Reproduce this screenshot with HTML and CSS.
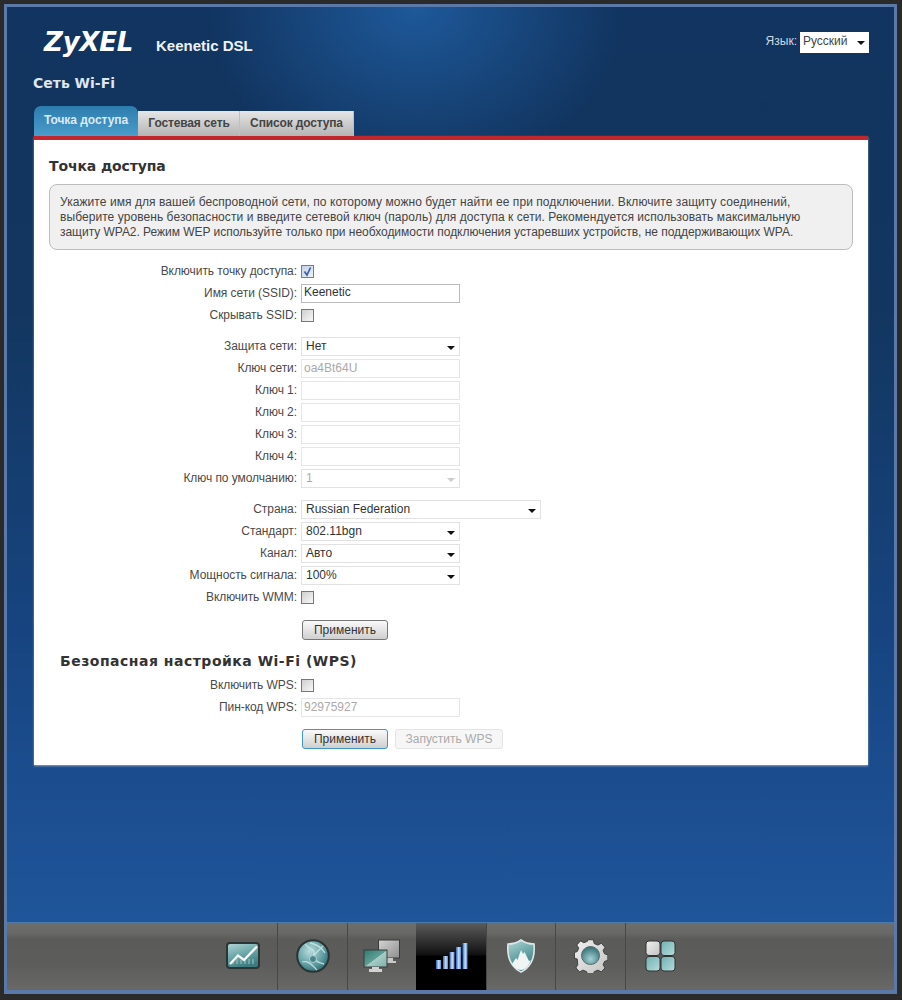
FILE: index.html
```html
<!DOCTYPE html>
<html lang="ru">
<head>
<meta charset="utf-8">
<title>Сеть Wi-Fi</title>
<link rel="stylesheet" href="styles.css">
</head>
<body>
<svg class="defs" width="0" height="0" aria-hidden="true">
  <defs>
    <linearGradient id="teal" x1="0" y1="0" x2="0.4" y2="1"><stop offset="0" stop-color="#b4d8d8"/><stop offset=".55" stop-color="#6ba6a8"/><stop offset="1" stop-color="#3c7c80"/></linearGradient>
    <linearGradient id="tealb" x1="0" y1="0" x2="1" y2="1"><stop offset="0" stop-color="#6fb0b2"/><stop offset="1" stop-color="#b9dcdc"/></linearGradient>
    <linearGradient id="screen" x1="0" y1="0" x2="1" y2="1"><stop offset="0" stop-color="#2f7a70"/><stop offset=".5" stop-color="#5f9f96"/><stop offset=".52" stop-color="#a8ccc6"/><stop offset="1" stop-color="#7fb0aa"/></linearGradient>
    <linearGradient id="grey" x1="0" y1="0" x2="1" y2="1"><stop offset="0" stop-color="#d4d4d4"/><stop offset="1" stop-color="#8e8e8e"/></linearGradient>
    <linearGradient id="light" x1="0" y1="0" x2="1" y2="1"><stop offset="0" stop-color="#f0f0f0"/><stop offset="1" stop-color="#c2c2c2"/></linearGradient>
    <linearGradient id="bar" x1="0" y1="0" x2="1" y2="0"><stop offset="0" stop-color="#2a62b0"/><stop offset=".55" stop-color="#cfe1f7"/><stop offset="1" stop-color="#4a8ad6"/></linearGradient>
    <radialGradient id="hub" cx=".5" cy=".7" r=".7"><stop offset="0" stop-color="#a5d2d4"/><stop offset="1" stop-color="#2f6c72"/></radialGradient>
    <radialGradient id="orb" cx=".4" cy=".35" r=".75"><stop offset="0" stop-color="#b9dcdc"/><stop offset=".6" stop-color="#5d9ca2"/><stop offset="1" stop-color="#235c63"/></radialGradient>
  </defs>
</svg>
<div class="frame">
  <main class="main">
    <header class="top">
      <div class="brand">
        <span class="logo">ZyXEL</span>
        <span class="model">Keenetic DSL</span>
      </div>
      <div class="lang">
        <span class="lang-label">Язык:</span>
        <div class="lang-select">Русский<i class="arrow"></i></div>
      </div>
    </header>
    <h1 class="page-title">Сеть Wi-Fi</h1>
    <nav class="tabs">
      <a class="tab tab-active">Точка доступа</a>
      <a class="tab tab-guest">Гостевая сеть</a>
      <a class="tab tab-list">Список доступа</a>
    </nav>
    <section class="panel">
      <h2 class="panel-title">Точка доступа</h2>
      <p class="info">Укажите имя для вашей беспроводной сети, по которому можно будет найти ее при подключении. Включите защиту соединений,<br>выберите уровень безопасности и введите сетевой ключ (пароль) для доступа к сети. Рекомендуется использовать максимальную<br><span class="info-tight">защиту WPA2. Режим WEP используйте только при необходимости подключения устаревших устройств, не поддерживающих WPA.</span></p>

      <div class="group">
        <div class="row"><span class="lbl">Включить точку доступа:</span><span class="check on"><svg width="11" height="11" viewBox="0 0 11 11"><path d="M2.5 5.5 L5 9 L8.5 1.5" fill="none" stroke="#3a5fa8" stroke-width="1.7"/></svg></span></div>
        <div class="row"><span class="lbl">Имя сети (SSID):</span><div class="field field-on">Keenetic</div></div>
        <div class="row"><span class="lbl">Скрывать SSID:</span><span class="check"></span></div>
      </div>

      <div class="group">
        <div class="row"><span class="lbl">Защита сети:</span><div class="select">Нет<i class="arrow"></i></div></div>
        <div class="row"><span class="lbl">Ключ сети:</span><div class="field field-off">oa4Bt64U</div></div>
        <div class="row"><span class="lbl">Ключ 1:</span><div class="field field-off"></div></div>
        <div class="row"><span class="lbl">Ключ 2:</span><div class="field field-off"></div></div>
        <div class="row"><span class="lbl">Ключ 3:</span><div class="field field-off"></div></div>
        <div class="row"><span class="lbl">Ключ 4:</span><div class="field field-off"></div></div>
        <div class="row"><span class="lbl">Ключ по умолчанию:</span><div class="select select-off">1<i class="arrow"></i></div></div>
      </div>

      <div class="group">
        <div class="row"><span class="lbl">Страна:</span><div class="select select-wide">Russian Federation<i class="arrow"></i></div></div>
        <div class="row"><span class="lbl">Стандарт:</span><div class="select">802.11bgn<i class="arrow"></i></div></div>
        <div class="row"><span class="lbl">Канал:</span><div class="select">Авто<i class="arrow"></i></div></div>
        <div class="row"><span class="lbl">Мощность сигнала:</span><div class="select">100%<i class="arrow"></i></div></div>
        <div class="row"><span class="lbl">Включить WMM:</span><span class="check"></span></div>
      </div>

      <div class="actions actions-first"><button class="btn" type="button">Применить</button></div>

      <h2 class="panel-title sub-title">Безопасная настройка Wi-Fi (WPS)</h2>

      <div class="row"><span class="lbl">Включить WPS:</span><span class="check"></span></div>
      <div class="row"><span class="lbl">Пин-код WPS:</span><div class="field field-off">92975927</div></div>

      <div class="actions actions-last">
        <button class="btn btn-primary" type="button">Применить</button>
        <button class="btn btn-off" type="button">Запустить WPS</button>
      </div>
    </section>
  </main>

  <footer class="dock">
    <a class="dock-item">
      <svg width="34" height="27" viewBox="0 0 34 27"><rect x="1" y="1" width="32" height="25" rx="3" fill="url(#teal)" stroke="#2c3534" stroke-width="2"/><path d="M7 22v-3M11 22v-5M15 22v-4M19 22v-5M23 22v-5M27 22v-5" stroke="#8fbcbc" stroke-width="1.2"/><path d="M4 22 L12 13.500 L18 18 L31 4.500" fill="none" stroke="#f4f7f6" stroke-width="2.4"/></svg>
    </a>
    <a class="dock-item dock-sep">
      <svg width="34" height="34" viewBox="0 0 34 34"><circle cx="17" cy="17" r="15.800" fill="url(#orb)" stroke="#2b3433" stroke-width="2"/><path d="M9 5 C13 11 19 9 18 16 C17 22 23 24 28 25 M6 23 C12 21 16 26 21 31 M18 16 L27 7 M14 4 C20 5 25 8 29 14" fill="none" stroke="#d6ebeb" stroke-width="1.300" opacity=".8"/><circle cx="17" cy="20" r="3.500" fill="#3e7c82" stroke="#cfe6e6" stroke-width=".8" opacity=".85"/></svg>
    </a>
    <a class="dock-item dock-sep">
      <svg width="38" height="34" viewBox="0 0 38 34"><rect x="15.500" y="1" width="21" height="18" fill="url(#grey)" stroke="#3a3a3a"/><path d="M24 19h6v3h3v2H21v-2h3z" fill="#c8c8c8"/><rect x="1" y="11" width="23" height="17" fill="url(#screen)" stroke="#3a3a3a"/><path d="M9 28h7v2h3v3H6v-3h3z" fill="#d2d2d2"/></svg>
    </a>
    <a class="dock-item dock-active">
      <svg width="33" height="28" viewBox="0 0 33 28"><rect x="1" y="18" width="5" height="9" fill="url(#bar)"/><rect x="8" y="14" width="5" height="13" fill="url(#bar)"/><rect x="14.500" y="10" width="5" height="17" fill="url(#bar)"/><rect x="21" y="5" width="5" height="22" fill="url(#bar)"/><rect x="27.500" y="1" width="5" height="26" fill="url(#bar)"/></svg>
    </a>
    <a class="dock-item dock-sep">
      <svg width="30" height="34" viewBox="0 0 30 34"><path d="M15 1 C19 4 24 5 28 5 C29 16 27 27 15 33 C3 27 1 16 2 5 C6 5 11 4 15 1Z" fill="url(#teal)" stroke="#dfe8e8" stroke-width="1.600"/><path d="M6 25 L10 19 L11.500 21 L15 11 L17 15 L18.500 13 L23 22 L24.500 21 C24 26 19 31 15 31 C11 31 8 28 6 25Z" fill="#eef5f4"/></svg>
    </a>
    <a class="dock-item dock-sep">
      <svg width="34" height="34" viewBox="0 0 34 34"><path d="M14 1h6l1 4 4 1.700 3.500-2 4 4.300-2 3.500 1.500 3.500 3.500 1v6l-3.500 1-1.500 3.500 2 3.500-4 4.300-3.500-2-4 1.700-1 3.500h-6l-1-3.500-4-1.700-3.500 2-4-4.300 2-3.500L3 21.500l-3-1v-6l3-1 1.500-3.500-2-3.500 4-4.300 3.500 2 4-1.700z" transform="scale(.94) translate(.5 -.2)" fill="url(#light)" stroke="#3c3c3c" stroke-width="1"/><circle cx="16.500" cy="16.500" r="9" fill="url(#hub)" stroke="#56686a"/></svg>
    </a>
    <a class="dock-item dock-sep">
      <svg width="31" height="32" viewBox="0 0 31 32"><rect x="1" y="1" width="14" height="14.500" rx="3" fill="url(#light)" stroke="#333"/><rect x="16" y="1" width="14" height="14.500" rx="3" fill="url(#tealb)" stroke="#333"/><rect x="1" y="16.500" width="14" height="14.500" rx="3" fill="url(#tealb)" stroke="#333"/><rect x="16" y="16.500" width="14" height="14.500" rx="3" fill="url(#tealb)" stroke="#333"/></svg>
    </a>
  </footer>
</div>
</body>
</html>
```

FILE: styles.css
```css
* { box-sizing: border-box; }

html, body { margin: 0; height: 100%; }

body {
  height: 1000px;
  padding: 4px 5px 6px 4px;
  overflow: hidden;
  background: #2a2a2b;
  font-family: "Liberation Sans", Arial, sans-serif;
  font-size: 12px;
  color: #444;
}

.defs { position: absolute; }

.frame {
  height: 100%;
  display: flex;
  flex-direction: column;
  border: 3px solid #5a78a8;
  border-bottom-width: 4px;
}

.main {
  flex: 1;
  display: flex;
  flex-direction: column;
  padding: 0 26px 0 27px;
  background:
    radial-gradient(ellipse 210px 170px at 46% 0%, rgba(33, 98, 168, .8), rgba(33, 98, 168, 0) 100%),
    linear-gradient(180deg, #113460 0, #12365f 300px, #174480 620px, #1e5398 880px, #1f5599 100%);
}

.top {
  height: 68px;
  display: flex;
  justify-content: space-between;
  align-items: flex-start;
}

.brand {
  display: flex;
  align-items: baseline;
  padding: 19px 0 0 10px;
}

.logo {
  font-family: "DejaVu Sans", sans-serif;
  font-weight: 700;
  font-style: italic;
  font-size: 26px;
  letter-spacing: -.2px;
  line-height: 32px;
  color: #fff;
  width: 112px;
}

.model {
  font-weight: 700;
  font-size: 15px;
  color: #eef2f7;
}

.lang {
  display: flex;
  align-items: flex-start;
  gap: 3px;
  padding-top: 25px;
  margin-right: -1px;
}

.lang-label {
  line-height: 18px;
  color: #cfd8e2;
}

.lang-select {
  position: relative;
  width: 69px;
  height: 21px;
  padding: 0 3px;
  line-height: 18px;
  background: #fff;
  color: #444;
}

.lang-select .arrow { top: 9px; right: 4px; }

.arrow {
  position: absolute;
  top: 8px;
  right: 4px;
  border-style: solid;
  border-width: 4px 4px 0;
  border-color: #111 transparent transparent;
}

.page-title {
  margin: 0 0 0 -1px;
  height: 31px;
  font-family: "DejaVu Sans", sans-serif;
  font-weight: 700;
  font-size: 14px;
  line-height: 17px;
  color: #dfe6ee;
}

.tabs {
  height: 30px;
  display: flex;
  align-items: flex-end;
}

.tab {
  height: 25px;
  display: block;
  padding: 0;
  font-weight: 700;
  line-height: 25px;
  letter-spacing: -.15px;
  color: #444;
  text-align: center;
  white-space: nowrap;
  background: linear-gradient(180deg, #e6e6e6, #b4b4b4);
  border-right: 1px solid #bfbfbf;
}

.tab-active {
  width: 104px;
  height: 30px;
  line-height: 28px;
  letter-spacing: -.05px;
  color: #dbe9f4;
  border: 0;
  border-radius: 7px 7px 0 0;
  background: linear-gradient(180deg, #2d7cae, #4a9ccb);
}

.tab-guest { width: 102px; padding-left: 1px; }
.tab-list { width: 114px; }

.panel {
  border-top: 4px solid #c1272d;
  height: 629px;
  padding: 16px 15px 0;
  background: #fff;
  box-shadow: 0 1px 2px rgba(180, 190, 200, .8);
}

.panel-title {
  margin: 0;
  height: 28px;
  font-family: "DejaVu Sans", sans-serif;
  font-weight: 700;
  font-size: 14px;
  line-height: 20px;
  letter-spacing: -.12px;
  color: #333;
}

.info {
  margin: 0 0 10px;
  height: 66px;
  padding: 10px 0 0 10px;
  font-size: 12px;
  line-height: 15px;
  letter-spacing: .065px;
  white-space: nowrap;
  color: #444;
  background: #f0f0f0;
  border: 1px solid #bcbcbc;
  border-radius: 8px;
}

.info-tight { letter-spacing: -.03px; }

.group { margin-bottom: 9px; }

.row {
  height: 22px;
  display: flex;
  align-items: center;
  gap: 4px;
}

.lbl {
  width: 248px;
  text-align: right;
  letter-spacing: -.06px;
  color: #4a4a4a;
}

.check {
  width: 13px;
  height: 13px;
  display: flex;
  align-items: center;
  justify-content: center;
  background: linear-gradient(135deg, #cfcfcf, #f8f8f8);
  border: 1px solid #777;
}

.check.on {
  background: linear-gradient(135deg, #c3d0e6, #eef2f8);
  border-color: #6f7f99;
}

.field, .select {
  position: relative;
  width: 159px;
  height: 19px;
  line-height: 16px;
  background: #fff;
}

.field { padding: 0 2px; }

.field-on {
  line-height: 15px;
  border: 1px solid #bbb;
  color: #333;
}

.field-off {
  border: 1px solid #e6e6e6;
  color: #aaa;
}

.select {
  padding: 0 4px;
  border: 1px solid #e2e2e2;
  color: #333;
}

.select-wide { width: 240px; }

.select-off {
  color: #aaa;
}

.select-off .arrow { border-top-color: #ccc; }

.actions {
  display: flex;
  gap: 7px;
  padding-left: 253px;
}

.actions-first { margin-top: 12px; }
.actions-last { margin-top: 11px; }

.btn {
  width: 86px;
  height: 20px;
  padding: 0;
  font-family: inherit;
  font-size: 12px;
  color: #333;
  background: linear-gradient(180deg, #fafafa, #cfcfcf);
  border: 1px solid #777;
  border-radius: 3px;
}

.btn-primary { border-color: #3f97c4; }

.btn-off {
  width: 108px;
  color: #aaa;
  background: #f6f6f6;
  border-color: #e4e4e4;
}

.sub-title {
  height: 34px;
  padding: 12px 0 0 11px;
  line-height: 18px;
  letter-spacing: .5px;
}

.dock {
  height: 68px;
  display: flex;
  justify-content: center;
  padding-left: 1px;
  border-top: 1px solid #4f78aa;
  background: linear-gradient(180deg, #6d6d6b 0, #686866 10px, #5b5b5a 16px, #5c5c5b 40px, #686866 100%);
}

.dock-item {
  width: 69.500px;
  display: flex;
  align-items: center;
  justify-content: center;
  padding-bottom: 2px;
}

.dock-sep { border-left: 1px solid #484846; }

.dock-active {
  background: linear-gradient(180deg, #5c5c5c 0, #101010 32px, #000 33px, #000 100%);
}
```
